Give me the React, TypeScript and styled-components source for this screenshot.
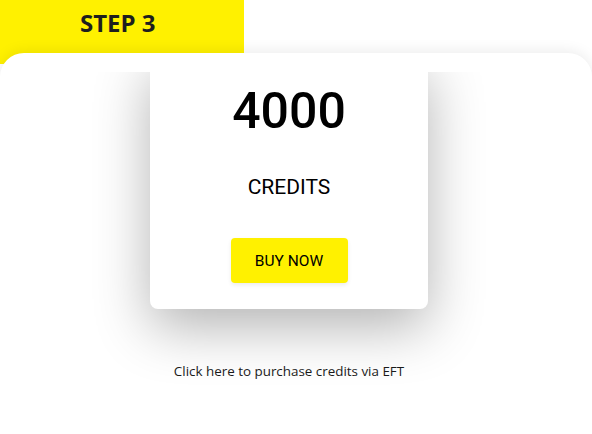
import styled, { createGlobalStyle } from 'styled-components'

const GlobalStyle = createGlobalStyle`
  html, body {
    margin: 0;
    padding: 0;
    background: #ffffff;
    overflow: hidden;
  }
  body {
    font-family: 'Open Sans', 'Liberation Sans', sans-serif;
  }
`

export default function App() {
  return (
    <Page>
      <GlobalStyle />
      <StepTab>
        <StepLabel>STEP 3</StepLabel>
      </StepTab>
      <Panel>
        <ScrollArea>
          <ScrollContent>
            <CreditCard>
              <Amount>4000</Amount>
              <Unit>CREDITS</Unit>
              <BuyButton>BUY NOW</BuyButton>
            </CreditCard>
            <EftLink>Click here to purchase credits via EFT</EftLink>
          </ScrollContent>
        </ScrollArea>
      </Panel>
    </Page>
  )
}

const Page = styled.div`
  display: flex;
  flex-direction: column;
  width: 592px;
  height: 434px;
  overflow: hidden;
`
const StepTab = styled.div`
  width: 244px;
  height: 64px;
  box-sizing: border-box;
  padding: 6px 0 0 80px;
  background: #fff100;
`
const StepLabel = styled.div`
  font-family: 'Open Sans', sans-serif;
  font-weight: 700;
  font-size: 24px;
  color: #1e1e1e;
`
const Panel = styled.div`
  position: relative;
  z-index: 1;
  flex: 1;
  margin-top: -11px;
  padding-top: 19px;
  background: #ffffff;
  border-radius: 24px 24px 0 0;
  box-shadow: 0 -2px 14px rgba(0, 0, 0, 0.08);
`
const ScrollArea = styled.div`
  height: 100%;
  overflow: hidden;
`
const ScrollContent = styled.div`
  display: flex;
  flex-direction: column;
  align-items: center;
  width: 578px;
  margin-top: -16px;
`
const CreditCard = styled.div`
  display: flex;
  flex-direction: column;
  align-items: center;
  width: 278px;
  box-sizing: border-box;
  padding: 24px 0 26px;
  background: #ffffff;
  border-radius: 8px;
  box-shadow: 0 18px 55px rgba(0, 0, 0, 0.3);
`
const Amount = styled.div`
  font-family: Roboto, sans-serif;
  font-weight: 500;
  font-size: 50px;
  line-height: 62px;
  color: #000000;
`
const Unit = styled.div`
  margin-top: 32px;
  font-family: Roboto, sans-serif;
  font-size: 21px;
  line-height: 26px;
  color: #000000;
`
const BuyButton = styled.button`
  margin-top: 38px;
  width: 117px;
  height: 45px;
  border: none;
  border-radius: 4px;
  background: #fff100;
  box-shadow: 0 2px 4px rgba(0, 0, 0, 0.08);
  font-family: Roboto, sans-serif;
  font-size: 15.5px;
  color: #000000;
  cursor: pointer;
`
const EftLink = styled.div`
  margin-top: 52px;
  font-family: 'Open Sans', sans-serif;
  font-size: 13.4px;
  line-height: 20px;
  color: #1a1a1a;
  cursor: pointer;
`
